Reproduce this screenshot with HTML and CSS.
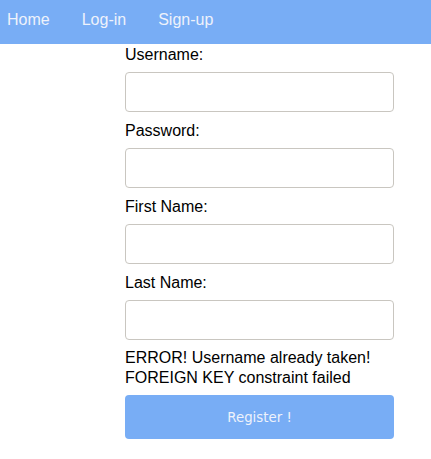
FILE: index.html
```html
<!DOCTYPE html>
<html>
<head>
<meta charset="utf-8">
<link rel="stylesheet" href="styles.css">
</head>
<body>
<nav class="nav">
  <a class="nav-link" href="#">Home</a>
  <a class="nav-link" href="#">Log-in</a>
  <a class="nav-link" href="#">Sign-up</a>
</nav>
<form class="form">
  <label class="label">Username:</label>
  <input class="input" type="text">
  <label class="label">Password:</label>
  <input class="input" type="password">
  <label class="label">First Name:</label>
  <input class="input" type="text">
  <label class="label">Last Name:</label>
  <input class="input" type="text">
  <p class="error">ERROR! Username already taken!<br>FOREIGN KEY constraint failed</p>
  <button class="btn" type="button">Register !</button>
</form>
</body>
</html>
```
FILE: styles.css
```css
html, body {
  margin: 0;
  padding: 0;
  background: #fff;
}
body {
  font-family: "Liberation Sans", Arial, sans-serif;
  font-size: 16px;
  color: #000;
}
.nav {
  display: flex;
  align-items: center;
  height: 44px;
  background: #78adf5;
  padding: 0 0 4px 7px;
  box-sizing: border-box;
  gap: 32px;
}
.nav-link {
  color: #eef2fb;
  text-decoration: none;
  font-size: 16px;
}
.form {
  display: flex;
  flex-direction: column;
  width: 269px;
  margin-left: 125px;
}
.label {
  display: block;
  line-height: 20px;
  padding-top: 1px;
  margin: 8px 0 7px;
}
.label:first-child {
  margin-top: 0;
}
.input {
  box-sizing: border-box;
  height: 40px;
  width: 269px;
  margin: 0;
  border: 1px solid #c9c6c0;
  border-radius: 4px;
  background: #fff;
  padding: 0 8px;
}
.error {
  margin: 8px 0 7px;
  line-height: 20px;
}
.btn {
  height: 44px;
  width: 269px;
  border: none;
  border-radius: 4px;
  background: #78adf5;
  color: #eef2fb;
  font-family: "DejaVu Sans", sans-serif;
  font-size: 13.333px;
  padding: 0;
}
```
